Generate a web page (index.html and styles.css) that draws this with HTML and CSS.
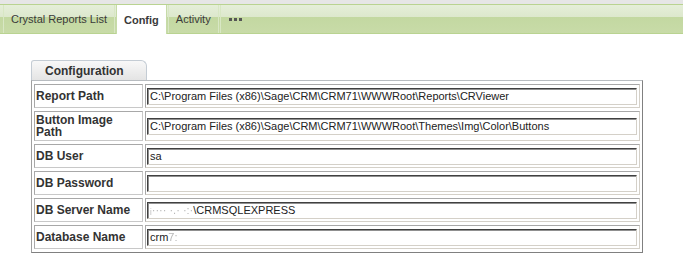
FILE: index.html
```html
<html lang="en">
<head>
    <meta charset="UTF-8">
    <title>Config</title>
    <link rel="stylesheet" href="styles.css">
</head>
<body>
<div class="tabbar">
    <ul class="tabs">
        <li class="tab">Crystal Reports List</li>
        <li class="tab active">Config</li>
        <li class="tab">Activity</li>
        <li class="tab more"><span></span><span></span><span></span></li>
    </ul>
</div>
<div class="content">
    <div class="panel-title">Configuration</div>
    <table class="config">
        <tr>
            <th>Report Path</th>
            <td><div class="field">C:\Program Files (x86)\Sage\CRM\CRM71\WWWRoot\Reports\CRViewer</div></td>
        </tr>
        <tr class="tall">
            <th>Button Image Path</th>
            <td><div class="field">C:\Program Files (x86)\Sage\CRM\CRM71\WWWRoot\Themes\Img\Color\Buttons</div></td>
        </tr>
        <tr>
            <th>DB User</th>
            <td><div class="field">sa</div></td>
        </tr>
        <tr>
            <th>DB Password</th>
            <td><div class="field"></div></td>
        </tr>
        <tr>
            <th>DB Server Name</th>
            <td><div class="field"><span class="blur">ᵢ···· ·.· ·:·</span>\CRMSQLEXPRESS</div></td>
        </tr>
        <tr>
            <th>Database Name</th>
            <td><div class="field">crm<span class="blur">7:</span></div></td>
        </tr>
    </table>
</div>
</body>
</html>
```

FILE: styles.css
```css
*{
    padding:0px;
    margin:0px;
}
body{
    font-family:"Liberation Sans",Arial,sans-serif;
    background:#fff;
    color:#333;
}
.tabbar{
    background:#e6e6e6;
    padding-top:4px;
}
.tabs{
    list-style:none;
    display:flex;
    height:28px;
    padding-left:3px;
    border-top:1px solid #b9d391;
    border-bottom:1px solid #b9d391;
    background:linear-gradient(#e5eed9 0%,#dde8cd 42%,#c3d8a1 44%,#c8dba8 100%);
}
.tab{
    display:flex;
    align-items:center;
    padding:0px 7px;
    margin-right:1px;
    border-left:1px solid #d8e7c4;
    border-right:1px solid #d8e7c4;
    font-size:11px;
    color:#3a3a3a;
}
.tab.active{
    background:#fff;
    font-weight:bold;
    margin-bottom:-1px;
    border-color:#c6dba8;
}
.tab.more{
    gap:2px;
    padding-left:8px;
    border-right:none;
}
.tab.more span{
    width:3px;
    height:3px;
    background:#555;
}
.content{
    padding:26px 0px 0px 31px;
}
.panel-title{
    width:101px;
    height:19px;
    line-height:20px;
    padding-left:13px;
    border:1px solid #c4ccd4;
    border-bottom:none;
    border-radius:3px 6px 0px 0px;
    background:linear-gradient(#f8f8f8,#e4e4e4);
    font-size:12px;
    font-weight:bold;
    color:#333;
}
.config{
    width:612px;
    border-collapse:separate;
    border-spacing:2px 3px;
    border:1px solid;
    border-color:#b8bcc0 #808080 #808080 #a0a0a0;
}
.config th{
    width:109px;
    height:24px;
    box-sizing:border-box;
    padding:2px 1px;
    text-align:left;
    vertical-align:middle;
    font-size:12px;
    line-height:12px;
    font-weight:bold;
    color:#333;
    border:1px solid;
    border-color:#a8a8a8 #c8c8c8 #c8c8c8 #a8a8a8;
}
.config td{
    height:24px;
    box-sizing:border-box;
    padding:3px 2px 2px 1px;
    vertical-align:middle;
    border:1px solid;
    border-color:#a8a8a8 #d4d0c8 #d4d0c8 #a8a8a8;
}
.config tr.tall th,
.config tr.tall td{
    height:30px;
}
.field{
    height:17px;
    box-sizing:border-box;
    padding-left:2px;
    line-height:15px;
    font-size:11px;
    color:#222;
    white-space:nowrap;
    overflow:hidden;
    border:1px solid;
    border-color:#404040 #d4d0c8 #d4d0c8 #404040;
    box-shadow:inset 1px 1px 0px #909090;
}
.blur{
    display:inline-block;
    color:#b8b8b8;
    filter:blur(0.4px);
}
```
